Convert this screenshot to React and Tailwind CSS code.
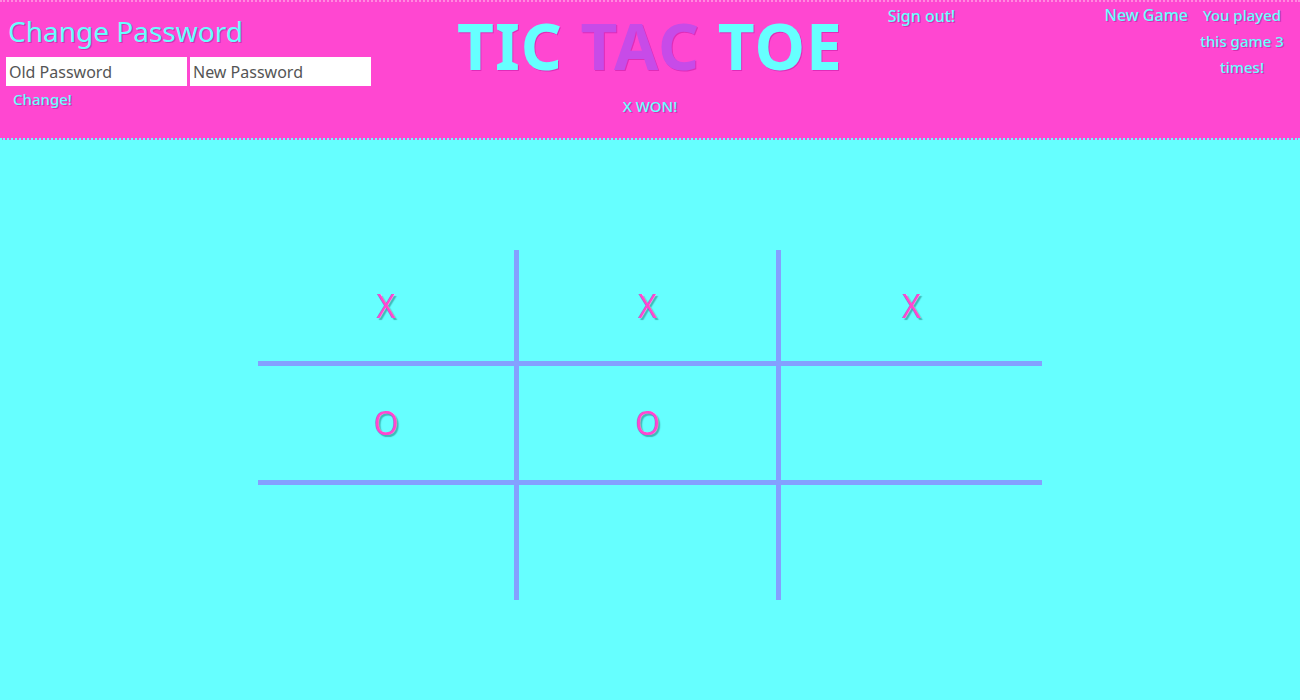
import React from 'react';

const board = ['X', 'X', 'X', 'O', 'O', '', '', '', ''];

const Cell = ({ value, index }) => {
  const col = index % 3;
  const row = Math.floor(index / 3);
  const heights = ['h-[116px]', 'h-[119px]', 'h-[115px]'];
  return (
    <div
      className={`flex items-center justify-center ${heights[row]} ${
        col < 2 ? 'border-r-[5px]' : ''
      } ${row < 2 ? 'border-b-[5px]' : ''} border-[#84a0ff]`}
    >
      <span className="text-[32px] leading-none text-[#ff47d1] [text-shadow:2px_2px_1px_#3fb8b8]">
        {value}
      </span>
    </div>
  );
};

const App = () => {
  const glow = '[text-shadow:1px_1px_0_#d92fb0]';
  return (
    <div className="min-h-[700px] bg-[#66ffff] font-['Noto_Sans',sans-serif]">
      {/* Header */}
      <header className="grid h-[140px] grid-cols-3 border-t-2 border-b-2 border-dotted border-[#66ffff] border-t-[#ff8ae0] bg-[#ff47d1]">
        <div className="pl-[6px] pt-[11px]">
          <h2 className={`pl-[2px] text-[28px] leading-[36px] text-[#66ffff] ${glow}`}>Change Password</h2>
          <form className="mt-[8px] flex gap-[3px]">
            <input
              placeholder="Old Password"
              className="h-[29px] w-[181px] bg-white px-[3px] text-[16px] text-[#555] placeholder-[#555] outline-none"
            />
            <input
              placeholder="New Password"
              className="h-[29px] w-[181px] bg-white px-[3px] text-[16px] text-[#555] placeholder-[#555] outline-none"
            />
          </form>
          <button className={`mt-[2px] pl-[7px] text-[15px] font-medium text-[#66ffff] ${glow}`}>Change!</button>
        </div>

        <div className="flex flex-col items-center pt-[8px]">
          <h1 className="text-[64px] font-bold leading-[72px] tracking-[1px] [text-shadow:1px_1px_0_#e02cb8]">
            <span className="text-[#66ffff]">TIC </span>
            <span className="text-[#c74be8]">TAC </span>
            <span className="text-[#66ffff]">TOE</span>
          </h1>
          <p className={`mt-[13px] text-[15px] font-medium text-[#66ffff] ${glow}`}>X WON!</p>
        </div>

        <div className="flex justify-between pl-[21px] pr-[12px]">
          <button className={`h-[28px] text-[16px] font-medium text-[#66ffff] ${glow}`}>Sign out!</button>
          <div className="flex gap-[8px]">
            <button className={`h-[26px] self-start text-[16px] font-medium text-[#66ffff] ${glow}`}>New Game</button>
            <p className={`w-[92px] text-center text-[15px] font-medium leading-[26px] text-[#66ffff] ${glow}`}>
              You played this game 3 times!
            </p>
          </div>
        </div>
      </header>

      {/* Board */}
      <main className="flex justify-center pt-[110px]">
        <div className="grid w-[784px] grid-cols-[261px_262px_261px]">
          {board.map((v, i) => (
            <Cell key={i} value={v} index={i} />
          ))}
        </div>
      </main>
    </div>
  );
};

export default App;
